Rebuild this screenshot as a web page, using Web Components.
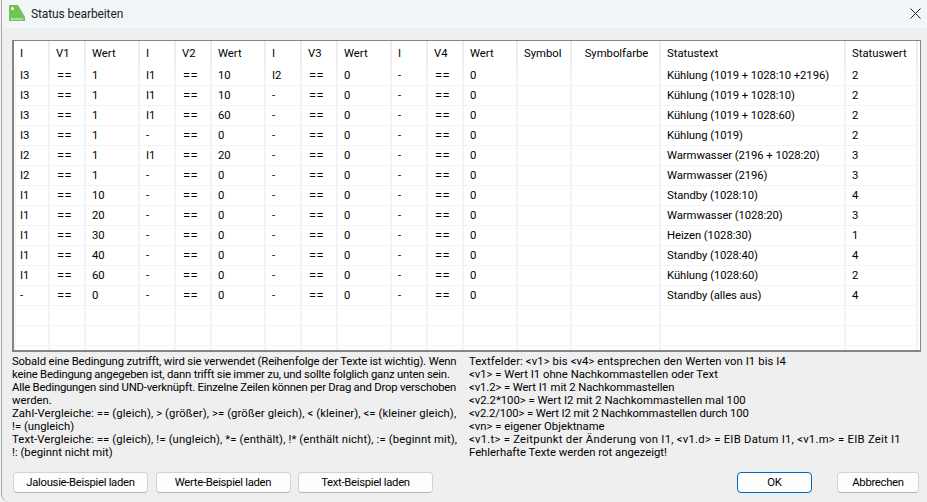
<!DOCTYPE html>
<html lang="de">
<head>
<meta charset="utf-8">
<title>Status bearbeiten</title>
<style>
  html, body {
    margin: 0;
    height: 100%;
    overflow: hidden;
    background: #f4f4f4;
    font-family: Roboto, "Liberation Sans", sans-serif;
    font-size: 11.3px;
    color: #000;
  }
  /* one line of help text, spacing set per line to hit the original line ends */
  hint-block div {
    height: 13px;
    line-height: 13px;
    white-space: nowrap;
  }
</style>
</head>
<body>
<status-dialog>
  <span slot="title">Status bearbeiten</span>
  <status-table slot="table"></status-table>
  <hint-block slot="left">
    <div style="letter-spacing:-.14px">Sobald eine Bedingung zutrifft, wird sie verwendet (Reihenfolge der Texte ist wichtig). Wenn</div>
    <div style="letter-spacing:-.21px">keine Bedingung angegeben ist, dann trifft sie immer zu, und sollte folglich ganz unten sein.</div>
    <div style="letter-spacing:-.21px">Alle Bedingungen sind UND-verknüpft. Einzelne Zeilen können per Drag and Drop verschoben</div>
    <div>werden.</div>
    <div style="letter-spacing:.1px">Zahl-Vergleiche: == (gleich), &gt; (größer), &gt;= (größer gleich), &lt; (kleiner), &lt;= (kleiner gleich),</div>
    <div>!= (ungleich)</div>
    <div style="letter-spacing:.12px">Text-Vergleiche: == (gleich), != (ungleich), *= (enthält), !* (enthält nicht), := (beginnt mit),</div>
    <div>!: (beginnt nicht mit)</div>
  </hint-block>
  <hint-block slot="right">
    <div style="letter-spacing:.09px">Textfelder: &lt;v1&gt; bis &lt;v4&gt; entsprechen den Werten von I1 bis I4</div>
    <div>&lt;v1&gt; = Wert I1 ohne Nachkommastellen oder Text</div>
    <div style="letter-spacing:-.1px">&lt;v1.2&gt; = Wert I1 mit 2 Nachkommastellen</div>
    <div>&lt;v2.2*100&gt; = Wert I2 mit 2 Nachkommastellen mal 100</div>
    <div style="letter-spacing:-.12px">&lt;v2.2/100&gt; = Wert I2 mit 2 Nachkommastellen durch 100</div>
    <div>&lt;vn&gt; = eigener Objektname</div>
    <div style="letter-spacing:.25px">&lt;v1.t&gt; = Zeitpunkt der Änderung von I1, &lt;v1.d&gt; = EIB Datum I1, &lt;v1.m&gt; = EIB Zeit I1</div>
    <div>Fehlerhafte Texte werden rot angezeigt!</div>
  </hint-block>
  <win-button slot="examples" style="width:135px">Jalousie-Beispiel laden</win-button>
  <win-button slot="examples" style="width:135px">Werte-Beispiel laden</win-button>
  <win-button slot="examples" style="width:135px">Text-Beispiel laden</win-button>
  <win-button slot="actions" primary style="width:75px">OK</win-button>
  <win-button slot="actions" style="width:82px">Abbrechen</win-button>
</status-dialog>

<script>
class StatusDialog extends HTMLElement {
  constructor() {
    super();
    this.attachShadow({ mode: 'open' });
  }

  connectedCallback() {
    this.shadowRoot.innerHTML = `
      <style>
        :host {
          display: flex;
          flex-direction: column;
          box-sizing: border-box;
          height: 502px;
          margin-left: 1px;
          background: #efefef;
          border-left: 1px solid #a8a8a8;
          border-bottom-left-radius: 8px;
        }
        header {
          display: flex;
          align-items: center;
          height: 28px;
          flex: none;
          padding-left: 7px;
          background: #f3f6f9;
          font-size: 12px;
          letter-spacing: -0.1px;
          color: #1a1a1a;
        }
        header svg.logo { flex: none; margin: -2px 6px 0 0; }
        header .title { flex: 1; }
        header svg.close { flex: none; margin: -2px 6px 0 0; }
        main {
          display: flex;
          flex-direction: column;
          flex: 1;
          padding: 12px 6px 9px 10px;
        }
        .hints {
          display: grid;
          grid-template-columns: 457px 1fr;
          margin-top: 3px;
        }
        .buttons {
          display: flex;
          justify-content: space-between;
          margin-top: auto;
          padding: 0 2px 0 1px;
        }
        .group { display: flex; gap: 7.5px; }
        .group.actions { gap: 25px; }
      </style>
      <header>
        <svg class="logo" width="16" height="16" viewBox="0 0 16 16">
          <path d="M0 0H9L16 12V16H0Z" fill="#72c455"/>
          <circle cx="3.5" cy="3.5" r="1.5" fill="#fff"/>
          <path d="M2 14H14" stroke="#d8f0cf" stroke-width="1.4" stroke-dasharray="2 .6"/>
        </svg>
        <span class="title"><slot name="title"></slot></span>
        <svg class="close" width="11" height="11" viewBox="0 0 11 11">
          <path d="M.5.5 10.5 10.5M10.5.5 .5 10.5" stroke="#222" stroke-width="1" fill="none"/>
        </svg>
      </header>
      <main>
        <slot name="table"></slot>
        <div class="hints">
          <slot name="left"></slot>
          <slot name="right"></slot>
        </div>
        <div class="buttons">
          <div class="group"><slot name="examples"></slot></div>
          <div class="group actions"><slot name="actions"></slot></div>
        </div>
      </main>
    `;
  }
}

const COLUMN_WIDTHS = [36, 36, 54, 36, 36, 54, 36, 36, 54, 36, 36, 54, 54, 89, 185, 72];
const HEADERS = ['I', 'V1', 'Wert', 'I', 'V2', 'Wert', 'I', 'V3', 'Wert', 'I', 'V4', 'Wert', 'Symbol', 'Symbolfarbe', 'Statustext', 'Statuswert'];

// I, Wert, I, Wert, I, Statustext, Statuswert
const ROWS = [
  ['I3', '1', 'I1', '10', 'I2', 'Kühlung (1019 + 1028:10 +2196)', '2'],
  ['I3', '1', 'I1', '10', '-', 'Kühlung (1019 + 1028:10)', '2'],
  ['I3', '1', 'I1', '60', '-', 'Kühlung (1019 + 1028:60)', '2'],
  ['I3', '1', '-', '0', '-', 'Kühlung (1019)', '2'],
  ['I2', '1', 'I1', '20', '-', 'Warmwasser (2196 + 1028:20)', '3'],
  ['I2', '1', '-', '0', '-', 'Warmwasser (2196)', '3'],
  ['I1', '10', '-', '0', '-', 'Standby (1028:10)', '4'],
  ['I1', '20', '-', '0', '-', 'Warmwasser (1028:20)', '3'],
  ['I1', '30', '-', '0', '-', 'Heizen (1028:30)', '1'],
  ['I1', '40', '-', '0', '-', 'Standby (1028:40)', '4'],
  ['I1', '60', '-', '0', '-', 'Kühlung (1028:60)', '2'],
  ['-', '0', '-', '0', '-', 'Standby (alles aus)', '4']
];

class StatusTable extends HTMLElement {
  constructor() {
    super();
    this.attachShadow({ mode: 'open' });
  }

  connectedCallback() {
    const cells = [];
    HEADERS.forEach((text, i) => {
      cells.push(`<div class="head${i === 13 ? ' center' : ''}">${text}</div>`);
    });
    ROWS.forEach(r => {
      const row = [r[0], '==', r[1], r[2], '==', r[3], r[4], '==', '0', '-', '==', '0', '', '', r[5], r[6]];
      row.forEach((text, i) => {
        const first = i === 0 ? ' first' : '';
        cells.push(`<div class="cell${first}${text === '==' ? ' op' : ''}">${text}</div>`);
      });
    });
    // the empty rows below the data, the last one is cut off by the frame
    for (let i = 0; i < 48; i++) cells.push(`<div class="cell${i % 16 === 0 ? ' first' : ''}"></div>`);

    this.shadowRoot.innerHTML = `
      <style>
        :host {
          display: block;
          box-sizing: border-box;
          width: 909px;
          height: 312px;
          overflow: hidden;
          background: #fff;
          border: 2px solid #858585;
          border-right-width: 1.5px;
          border-top-width: 1.5px;
          flex: none;
        }
        .grid {
          display: grid;
          grid-template-columns: ${COLUMN_WIDTHS.map(w => w + 'px').join(' ')};
          grid-auto-rows: 20px;
          grid-template-rows: 25px;
        }
        .head, .cell {
          box-sizing: border-box;
          white-space: nowrap;
          overflow: hidden;
          padding-left: 6px;
          line-height: 20px;
          color: #000;
        }
        .head {
          padding-top: 3px;
          box-shadow: inset -2px 0 0 #ececec;
        }
        .head.center { text-align: center; padding-left: 0; }
        .cell {
          letter-spacing: -0.08px;
          border-right: 2px solid #f1f3f9;
          border-bottom: 1.5px solid #f1f3f9;
        }
        .cell.first { box-shadow: inset 1.5px 0 0 #f1f3f9; }
        .cell.op {
          padding-left: 7px;
          letter-spacing: 0.4px;
          font-size: 13px;
        }
      </style>
      <div class="grid">${cells.join('')}</div>
    `;
  }
}

class HintBlock extends HTMLElement {
  constructor() {
    super();
    this.attachShadow({ mode: 'open' });
  }

  connectedCallback() {
    this.shadowRoot.innerHTML = `
      <style>
        :host { display: block; color: #000; }
      </style>
      <slot></slot>
    `;
  }
}

class WinButton extends HTMLElement {
  constructor() {
    super();
    this.attachShadow({ mode: 'open' });
  }

  connectedCallback() {
    this.shadowRoot.innerHTML = `
      <style>
        :host {
          display: flex;
          align-items: center;
          justify-content: center;
          box-sizing: border-box;
          height: 21px;
          background: #fdfdfd;
          border: 1px solid #d2d2d2;
          border-bottom-color: #b4b4b4;
          border-radius: 4px;
          color: #000;
          letter-spacing: -0.3px;
        }
        :host([primary]) {
          border: 1.5px solid #0067c0;
        }
      </style>
      <slot></slot>
    `;
  }
}

customElements.define('status-dialog', StatusDialog);
customElements.define('status-table', StatusTable);
customElements.define('hint-block', HintBlock);
customElements.define('win-button', WinButton);
</script>
</body>
</html>
